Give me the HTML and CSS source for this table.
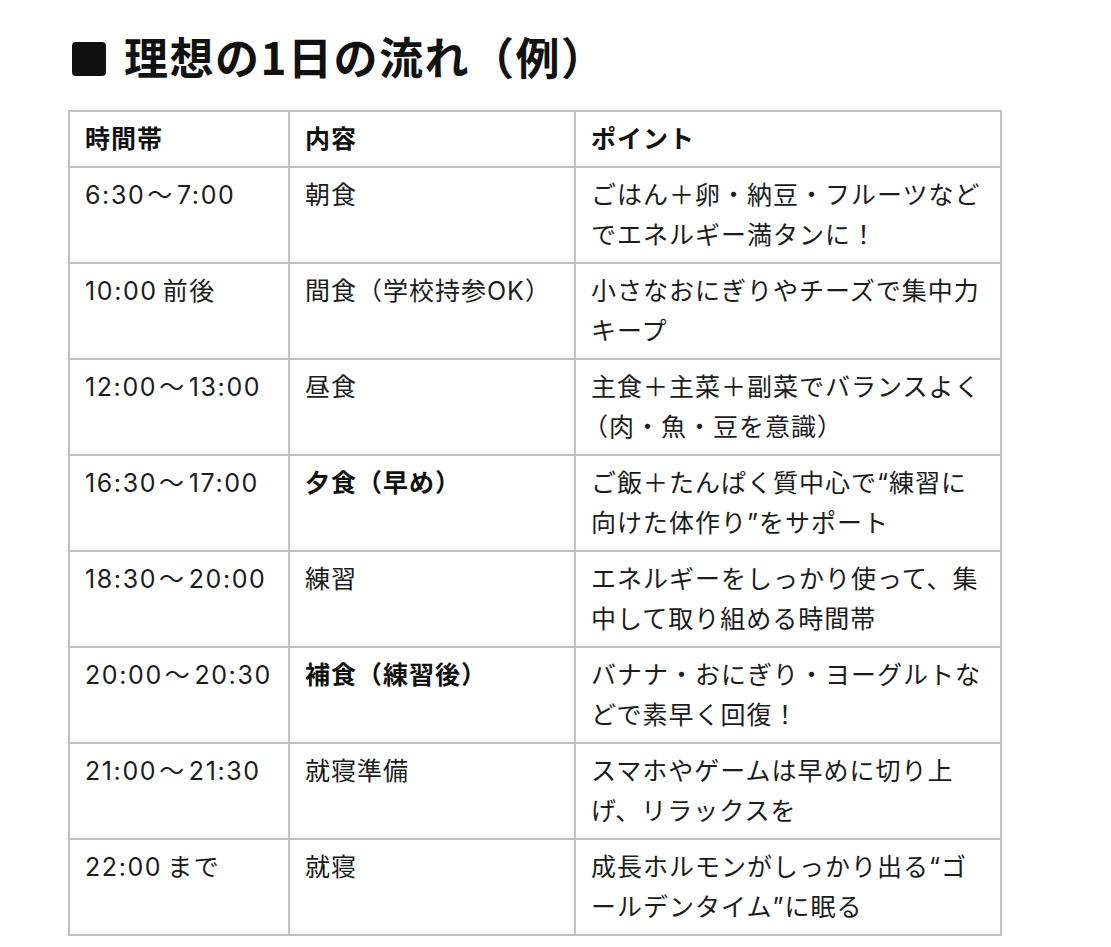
FILE: index.html
```html
<!DOCTYPE html>
<html lang="ja">
<head>
<meta charset="utf-8">
<link rel="stylesheet" href="styles.css">
</head>
<body>
<div class="page">
  <h2 class="title"><span class="square"></span><span class="title-text">理想の1日の流れ（例）</span></h2>
  <table class="schedule">
    <colgroup>
      <col class="c1"><col class="c2"><col class="c3">
    </colgroup>
    <thead>
      <tr><th>時間帯</th><th>内容</th><th>ポイント</th></tr>
    </thead>
    <tbody>
      <tr><td class="time">6:30<span class="tilde">〜</span>7:00</td><td>朝食</td><td>ごはん＋卵・納豆・フルーツなど<br>でエネルギー満タンに！</td></tr>
      <tr><td class="time">10:00<span class="gap"></span>前後</td><td>間食（学校持参OK）</td><td>小さなおにぎりやチーズで集中力<br>キープ</td></tr>
      <tr><td class="time">12:00<span class="tilde">〜</span>13:00</td><td>昼食</td><td>主食＋主菜＋副菜でバランスよく<br><span class="paren">（</span>肉・魚・豆を意識）</td></tr>
      <tr><td class="time">16:30<span class="tilde">〜</span>17:00</td><td><strong>夕食（早め）</strong></td><td>ご飯＋たんぱく質中心で“練習に<br>向けた体作り”をサポート</td></tr>
      <tr><td class="time">18:30<span class="tilde">〜</span>20:00</td><td>練習</td><td>エネルギーをしっかり使って、集<br>中して取り組める時間帯</td></tr>
      <tr><td class="time">20:00<span class="tilde">〜</span>20:30</td><td><strong>補食（練習後）</strong></td><td>バナナ・おにぎり・ヨーグルトな<br>どで素早く回復！</td></tr>
      <tr><td class="time">21:00<span class="tilde">〜</span>21:30</td><td>就寝準備</td><td>スマホやゲームは早めに切り上<br>げ、リラックスを</td></tr>
      <tr><td class="time">22:00<span class="gap"></span>まで</td><td>就寝</td><td>成長ホルモンがしっかり出る“ゴ<br>ールデンタイム”に眠る</td></tr>
    </tbody>
  </table>
</div>
</body>
</html>
```

FILE: styles.css
```css
html, body {
  margin: 0;
  padding: 0;
  background: #ffffff;
}

body {
  font-family: "Inter", "Noto Sans CJK JP", "Noto Sans", sans-serif;
  color: #1c1c1c;
}

.page {
  padding: 28px 0 0 68px;
}

.title {
  display: flex;
  align-items: center;
  gap: 18px;
  margin: 0 0 26px 4px;
  font-family: "Noto Sans CJK JP", sans-serif;
  font-size: 44px;
  line-height: 56px;
  font-weight: 700;
  letter-spacing: 1.5px;
  color: #111111;
}

.square {
  display: block;
  width: 34px;
  height: 34px;
  border-radius: 4px;
  background: #111111;
  margin-top: 6px;
}

.schedule {
  border-collapse: collapse;
  table-layout: fixed;
  width: 932px;
  font-size: 25px;
  letter-spacing: 1px;
  line-height: 40px;
}

.c1 { width: 220px; }
.c2 { width: 286px; }
.c3 { width: 426px; }

.schedule th,
.schedule td {
  border: 2px solid #c2c2c2;
  padding: 7px 15px;
  text-align: left;
  vertical-align: top;
  white-space: nowrap;
}

.schedule th {
  font-weight: 700;
  color: #111111;
}

.schedule td {
  font-weight: 400;
}

.schedule td.time {
  letter-spacing: 1.6px;
}

.tilde {
  display: inline-block;
  margin: 0 3px 0 2px;
}

.schedule strong {
  font-weight: 700;
  color: #111111;
}

.gap {
  display: inline-block;
  width: 5px;
}

.paren {
  margin-left: -8px;
}
```
